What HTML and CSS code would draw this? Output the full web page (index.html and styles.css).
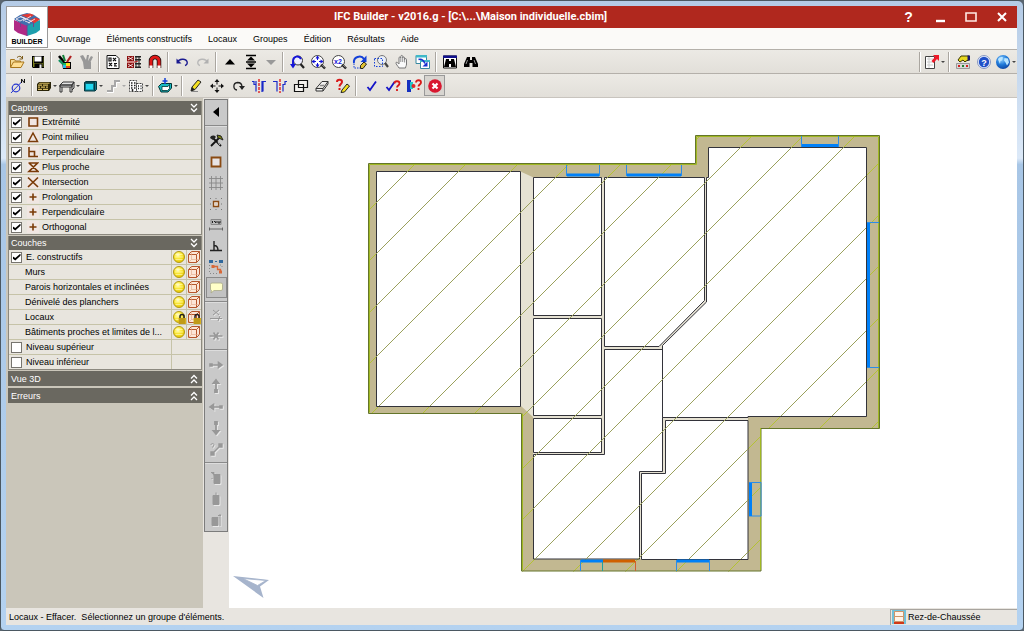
FILE: index.html
```html
<!DOCTYPE html>
<html lang="fr">
<head>
<meta charset="utf-8">
<title>IFC Builder</title>
<link rel="stylesheet" href="styles.css">
</head>
<body>
<svg class="defs" aria-hidden="true">
  <defs>
    <radialGradient id="gBulb" cx=".4" cy=".3" r=".7"><stop offset="0" stop-color="#fffde0"/><stop offset=".35" stop-color="#fff04a"/><stop offset="1" stop-color="#e8c800"/></radialGradient>
    <radialGradient id="gBlue" cx=".4" cy=".3" r=".8"><stop offset="0" stop-color="#8fd0ff"/><stop offset=".5" stop-color="#1e78d8"/><stop offset="1" stop-color="#0a3a98"/></radialGradient>
  </defs>
  <symbol id="bulb" viewBox="0 0 14 14"><circle cx="7" cy="7" r="5.500" fill="url(#gBulb)" stroke="#b09818"/><path d="M3.500 4.500h7M3 7h8M3.500 9.500h7" stroke="#fffbc0" stroke-width=".6"/></symbol>
  <symbol id="cube" viewBox="0 0 14 14"><path d="M1.500 4.500l3-3h8v8l-3 3h-8zM1.500 4.500h8v8M9.500 4.500l3-3" fill="#fce6d6" stroke="#b5562c"/><path d="M4.500 2v7.500l-3 3M4.500 9.500h8" fill="none" stroke="#e2a888" stroke-width=".6"/></symbol>
  <symbol id="lock" viewBox="0 0 14 14"><path d="M8 8V6.500a2 2 0 0 1 4 0V8" fill="none" stroke="#222" stroke-width="1.500"/><path d="M6.500 8h7.500v6H6.500z" fill="#d8b020"/><path d="M8 8v6M10 8v6M12 8v6" stroke="#8a6c08" stroke-width=".6"/></symbol>
  <symbol id="chev" viewBox="0 0 10 10"><path d="M2 1l3 3 3-3M2 5.500l3 3 3-3" fill="none" stroke="#fff" stroke-width="1.300"/></symbol>
  <symbol id="plus" viewBox="0 0 12 12"><path d="M6 2.500v7M2.500 6h7" stroke="#7a3b08" stroke-width="1.600"/></symbol>
  <symbol id="lens" viewBox="0 0 16 16"><path d="M11 10.500l4 4" stroke="#222" stroke-width="2.400"/><path d="M11.500 10.500l3 3" stroke="#aaa" stroke-width=".7"/></symbol>
</svg>

<div class="window">
  <header class="header">
    <div class="logo">
      <svg viewBox="0 0 28 23" width="28" height="23" aria-hidden="true">
        <path d="M1 7l13 5v11l-9-3-4-3z" fill="#b02a86"/><path d="M27 7l-13 5v11l9-3 4-3z" fill="#1d9fae"/>
        <path d="M1 6l6-4 7-2 7 2 6 4-6 4-7 3-7-3z" fill="#3f6fae"/>
        <path d="M8 2l8 3.500 5-3.500-4-1.500zM17 7l6-2.500 4 2-6 4z" fill="#e23a34"/>
        <path d="M3 6l5-2.500 4 2-5 2.500zM12 8l5 2M10 4.500l9 4M18 3l-8 5M22 6l-7 4M7 3.500l6 2.500" fill="none" stroke="#f5e6ee" stroke-width=".9"/>
        <path d="M14 12v11M7.500 9.500V14M20.500 9.500V14" stroke="#74408e"/>
      </svg>
      <span>BUILDER</span>
    </div>
    <div class="titlebar">
      <h1 class="title">IFC Builder - v2016.g - [C:\...\Maison individuelle.cbim]</h1>
      <button class="wbtn" aria-label="Aide"><span class="qmark">?</span></button>
      <button class="wbtn" aria-label="Réduire"><svg viewBox="0 0 14 14"><path d="M3 11h9" stroke="#fff" stroke-width="2.400"/></svg></button>
      <button class="wbtn" aria-label="Agrandir"><svg viewBox="0 0 14 14"><path d="M2 3h10v8H2z" fill="none" stroke="#ffe9e4" stroke-width="1.600"/></svg></button>
      <button class="wbtn" aria-label="Fermer"><svg viewBox="0 0 14 14"><path d="M3 3l8 8M11 3l-8 8" stroke="#fff" stroke-width="2"/></svg></button>
    </div>
    <nav class="menubar">
      <button>Ouvrage</button><button>Éléments constructifs</button><button>Locaux</button><button>Groupes</button><button>Édition</button><button>Résultats</button><button>Aide</button>
    </nav>
  </header>

  <div class="toolbar">
    <button class="tb" aria-label="Ouvrir"><svg viewBox="0 0 16 16"><path d="M1.500 13V5.500h4l1 1.500h5v2" fill="#f5dc98" stroke="#a8761c"/><path d="M1.500 13.500l3-5.500h10.500l-3 5.500z" fill="#ffdf94" stroke="#a8761c"/><path d="M8 3.500c2-1.800 4-1.500 5 .5M13.500 2v3h-3" fill="none" stroke="#7a5a18"/></svg></button>
    <button class="tb" aria-label="Enregistrer"><svg viewBox="0 0 16 16"><path d="M2 2h12v12H3l-1-1z" fill="#000"/><path d="M3 3h1v6h9V3h.500v10H3z" fill="#7f8420"/><path d="M4.500 2.500h7v5h-7z" fill="#fff"/><path d="M4.500 9.500h8V14h-8z" fill="#000"/><path d="M9.500 10.500h2V14h-2z" fill="#e8e8e8"/></svg></button>
    <i class="sep"></i>
    <button class="tb" aria-label="Attributs"><svg viewBox="0 0 16 16"><path d="M5 8h9v7H6z" fill="#000"/><path d="M6 9h3v2H6z" fill="#18c060"/><path d="M9 9h4v3H9z" fill="#f8e020"/><path d="M6 11h3v3H6z" fill="#28b8e8"/><path d="M9 12h4v2H9z" fill="#e04020"/><path d="M2 2l5 6" stroke="#000" stroke-width="2.600"/><path d="M6 1l2 6" stroke="#108038" stroke-width="2"/><path d="M14 2l-4 6" stroke="#b02020" stroke-width="2.200"/><path d="M2 6l4 4" stroke="#109060" stroke-width="2.400"/></svg></button>
    <button class="tb" aria-label="Attributs inactifs"><svg viewBox="0 0 16 16"><path d="M5 8h8v7H6zM2 2l3-1 3 5 1-5h2l-1 6 3-5 2 1-3 6-6 1z" fill="#989898"/></svg></button>
    <i class="sep"></i>
    <button class="tb" aria-label="Calque DXF"><svg viewBox="0 0 16 16"><path d="M2 1.500h9l3 3v10H2z" fill="#fff" stroke="#111"/><path d="M4 4h2v3H4zM8 4l3 3M11 4L8 7M4 9l3 3M7 9l-3 3M9 9.500h3M10 9v3.500M9 12h3" fill="none" stroke="#111" stroke-width="1.200"/></svg></button>
    <button class="tb" aria-label="Calques"><svg viewBox="0 0 16 16"><path d="M1 2h7v5H1zM1 9h7v5H1z" fill="#8c1010"/><path d="M2 3l5 3M7 3L2 6M2 10l5 3M7 10l-5 3" stroke="#fff" stroke-width=".8"/><path d="M9 2h6v1.500H9zM9 5h6v1.500H9zM9 9h6v1.500H9zM9 12.500h6V14H9z" fill="#222"/><path d="M10 2v12M13 2v12" stroke="#222"/><path d="M1 8h8l3-1" fill="none" stroke="#c02020"/></svg></button>
    <button class="tb" aria-label="Accrochage"><svg viewBox="0 0 16 16"><path d="M4 14V7a4 4 0 0 1 8 0v7" fill="none" stroke="#111" stroke-width="4.500"/><path d="M4 13.500V7a4 4 0 0 1 8 0v6.500" fill="none" stroke="#e01818" stroke-width="3"/><path d="M2.500 11.500h3V14h-3zM10.500 11.500h3V14h-3z" fill="#fff"/></svg></button>
    <i class="sep"></i>
    <button class="tb" aria-label="Annuler"><svg viewBox="0 0 16 16"><path d="M3.500 8c1.500-3 8-4 9.500-.5.800 2-.5 3.500-2 4" fill="none" stroke="#1a1a90" stroke-width="1.400"/><path d="M2.500 4.500v5h5z" fill="#1a1a90"/></svg></button>
    <button class="tb" aria-label="Rétablir"><svg viewBox="0 0 16 16"><path d="M12.500 8C11 5 4.500 4 3 7.500c-.8 2 .5 3.500 2 4" fill="none" stroke="#b8b8b8" stroke-width="1.400"/><path d="M13.500 4.500v5h-5z" fill="#b0b0b0"/></svg></button>
    <i class="sep"></i>
    <button class="tb" aria-label="Monter"><svg viewBox="0 0 16 16"><path d="M3 10.500L8 5l5 5.500z"/></svg></button>
    <button class="tb" aria-label="Aller à l'étage"><svg viewBox="0 0 16 16"><path d="M3 1.500h10M3 14.500h10M3 8h10" stroke="#000" stroke-width="1.300"/><path d="M4 6.500l4-4 4 4zM4 9.500l4 4 4-4z"/></svg></button>
    <button class="tb slim" aria-label="Descendre"><svg viewBox="0 0 16 16"><path d="M3 6l5 5 5-5z" fill="#999"/></svg></button>
    <i class="sep"></i>
    <button class="tb" aria-label="Zoom précédent"><svg viewBox="0 0 16 16"><circle cx="9" cy="6.500" r="4.500" fill="#eef" stroke="#333"/><path d="M11.500 10l3.500 4" stroke="#222" stroke-width="2.200"/><path d="M4 12V7c0-5 6-6 8-2" fill="none" stroke="#1414d8" stroke-width="1.900"/><path d="M1 10h6l-3 4.500z" fill="#1414d8"/></svg></button>
    <button class="tb" aria-label="Zoom étendu"><svg viewBox="0 0 16 16"><circle cx="7.500" cy="7.500" r="6" fill="#fff" stroke="#444"/><use href="#lens"/><path d="M7.500 2v11M2 7.500h11" stroke="#1414d8" stroke-dasharray="4 3"/><path d="M5.500 4.500l2-3 2 3zM5.500 10.500l2 3 2-3zM4.500 5.500l-3 2 3 2zM10.500 5.500l3 2-3 2z" fill="#1414d8"/></svg></button>
    <button class="tb" aria-label="Zoom x2"><svg viewBox="0 0 16 16"><circle cx="7.500" cy="7.500" r="6" fill="#fff" stroke="#444"/><use href="#lens"/><text x="3" y="10" class="x2">x2</text></svg></button>
    <button class="tb" aria-label="Redessiner"><svg viewBox="0 0 16 16"><path d="M2 9c-1-6 7-8.500 10-4" fill="none" stroke="#1440d8" stroke-width="2"/><path d="M14.500 1.500V8H8.500z" fill="#1440d8"/><path d="M2 9.500v4.500h6" fill="none" stroke="#1440d8" stroke-dasharray="1.500 1"/><path d="M8.500 11.500l3.500-3.500 2.500 2-3.500 4.500H8.500z" fill="#e0c030" stroke="#222"/></svg></button>
    <button class="tb" aria-label="Zoom fenêtre"><svg viewBox="0 0 16 16"><circle cx="9" cy="6" r="4.500" fill="#e8eef8" stroke="#777"/><path d="M12 9l3 4" stroke="#444" stroke-width="2.200"/><path d="M1.500 4.500h8v8h-8z" fill="none" stroke="#1440d8" stroke-dasharray="1.500 1.500"/></svg></button>
    <button class="tb" aria-label="Déplacer la vue"><svg viewBox="0 0 16 16"><path d="M5 14c-1-2-3.500-4-3-5.500 1-.8 2 .8 3 1.500V4c0-1.500 1.800-1.500 1.800 0V2.500c0-1.500 1.900-1.500 1.900 0V4c0-1.500 1.900-1.300 1.900 0v1.500c0-1.200 1.900-1.200 1.900 0V10c0 2-1 2.500-1 4z" fill="#fafafa" stroke="#777"/><path d="M6.800 4v4M8.700 4v4M10.600 5v3.500" stroke="#777" stroke-width=".8"/></svg></button>
    <button class="tb" aria-label="Vue suivante"><svg viewBox="0 0 16 16"><path d="M1 1.500h10.500v8H1z" fill="#fff" stroke="#3888a0"/><path d="M1 1h11v2.500H1z" fill="#40b8c8"/><path d="M5.500 6.500h9v8h-9z" fill="#fff" stroke="#3888a0"/><path d="M5 6h10v2H5z" fill="#40b8c8"/><path d="M3.500 5.500c3-1 5 .5 6.500 4" fill="none" stroke="#1830d0" stroke-width="1.600"/><path d="M12.500 7.500v5h-5z" fill="#1830d0"/></svg></button>
    <i class="sep"></i>
    <button class="tb" aria-label="Rechercher dans la vue"><svg viewBox="0 0 16 16"><path d="M1.500 2h13v12h-13z" fill="#fff" stroke="#111"/><path d="M1 1.500h14V4H1z" fill="#10108c"/><path d="M4 5h3v2h2V5h3l2 8H9v-3H7v3H2z"/></svg></button>
    <button class="tb" aria-label="Rechercher"><svg viewBox="0 0 16 16"><path d="M4 3h3v3h2V3h3l3 7v3H9.500V9h-3v4H1v-3z"/><path d="M4.500 6L3 10M11 6l1.500 4" stroke="#bbb" stroke-width=".8"/></svg></button>
    <span class="spring"></span>
    <i class="sep"></i>
    <button class="tb wide" aria-label="Exporter"><svg viewBox="0 0 16 16"><path d="M1.500 2.500h9v12h-9z" fill="#fff" stroke="#444"/><path d="M3 5h6M3 8h6M3 11h6M5 3v11" stroke="#ccc"/><path d="M9 1h6v6l-2-2-3.500 4-2-2L11 3z" fill="#f01828"/></svg><b class="dd"></b></button>
    <i class="sep"></i>
    <button class="tb" aria-label="Options"><svg viewBox="0 0 16 16"><path d="M1.500 9.500h13v5h-13z" fill="#d8d8d8" stroke="#999"/><path d="M3 11h2v2H3zM11 11h2v2h-2z" fill="#d02020"/><path d="M7 11h2v2H7z" fill="#208030"/><path d="M3 6l3-4h8v4l-3 1-1 1-2-2-3 2z" fill="#e8d820" stroke="#3c3800"/><path d="M12.500 1.500H15v5h-2.500z" fill="#181870"/></svg></button>
    <button class="tb" aria-label="Aide en ligne"><svg viewBox="0 0 16 16"><circle cx="8" cy="8" r="6.500" fill="#e8f0ff" stroke="#8898c0"/><circle cx="8" cy="8" r="5.200" fill="#2050c8"/><text x="8" y="11.500" class="help">?</text></svg></button>
    <button class="tb wide" aria-label="Internet"><svg viewBox="0 0 16 16"><circle cx="8" cy="8" r="7" fill="url(#gBlue)"/><path d="M3 5.500c1-2.500 3.500-3 5-2l-1 3-1.500.5L5 10zM9.500 4l3.500.500 1 4-2 3-1.500-3-1.500-2z" fill="#b8e4ff"/></svg><b class="dd"></b></button>
  </div>

  <div class="toolbar second">
    <button class="tb wide" aria-label="Référence"><svg viewBox="0 0 16 16"><circle cx="6" cy="10" r="3.800" fill="none" stroke="#2838d0" stroke-width="1.200"/><path d="M1 15L12 3.500" stroke="#2838d0"/><path d="M11.500 5V1l3 4V1" fill="none" stroke="#111"/></svg></button>
    <i class="sep"></i>
    <button class="tb wide" aria-label="Murs"><svg viewBox="0 0 16 16"><path d="M1 6l2-2h12v6l-2 3H1z" fill="#2a2408"/><path d="M2 6.500h4v1.300H2zM7 6.500h5v1.300H7zM2 8.500h2v1.300H2zM5 8.500h4v1.300H5zM10 8.500h2v1.300h-2zM2 10.700h4V12H2zM7 10.700h5V12H7zM3.500 4.800h10v.9H3z" fill="#d8bc60"/></svg><b class="dd"></b></button>
    <button class="tb wide" aria-label="Planchers"><svg viewBox="0 0 16 16"><path d="M1 7l3-3h11l-2 3zM1 7h12v2H1zM1 7v7h2V9M11 9v5h2V7l2-3v6l-2 2" fill="#e4e4e4" stroke="#333"/></svg><b class="dd"></b></button>
    <button class="tb wide" aria-label="Ouvertures"><svg viewBox="0 0 16 16"><path d="M2.500 4.500l1.500-1h10.500v8l-1.500 1.500H2.500z" fill="#107888" stroke="#043840"/><path d="M4 6h7v5.500H4z" fill="#20d8f0"/><path d="M12.500 4.500v8M2.500 4.800h10" stroke="#043840"/></svg><b class="dd"></b></button>
    <button class="tb wide" aria-label="Escaliers" disabled><svg viewBox="0 0 16 16"><path d="M2 13h5V8h3V3h5" fill="none" stroke="#a8a8a8" stroke-width="2"/><path d="M2 14.500h6.500v-5h3v-5H15" fill="none" stroke="#fff"/></svg><b class="dd pale"></b></button>
    <button class="tb wide" aria-label="Bâtiments"><svg viewBox="0 0 16 16"><path d="M1.500 2.500h7v11h-7zM8.500 5.500h6v8h-6z" fill="#fff" stroke="#444" stroke-dasharray="2 1"/><path d="M3 5h1.500M6 5h1.500M3 7.500h1.500M6 7.500h1.500M3 10h1.500M6 10h1.500M10 8h1M12.500 8h1M10 10.500h1M12.500 10.500h1M4.500 13v-2" stroke="#222" stroke-width="1.500"/></svg><b class="dd"></b></button>
    <i class="sep"></i>
    <button class="tb wide" aria-label="Locaux"><svg viewBox="0 0 16 16"><path d="M1.500 8.500l3-3h10v4.500l-3.500 4h-7z" fill="#18b8c0" stroke="#033"/><path d="M5 8.500h6l1.500-2v4l-2 2H5z" fill="#fff" stroke="#033" stroke-width=".8"/><path d="M8 0v6M5.500 3h5" stroke="#1440d8" stroke-width="1.500"/></svg><b class="dd"></b></button>
    <i class="sep"></i>
    <button class="tb" aria-label="Modifier"><svg viewBox="0 0 16 16"><path d="M4 9l6-7 3 2-6 7.500-4 1.500z" fill="#f4e020" stroke="#222"/><path d="M4 9l3 2.500-4 1.500z" fill="#222"/><path d="M3 13.500h7" stroke="#888"/></svg></button>
    <button class="tb" aria-label="Déplacer"><svg viewBox="0 0 16 16"><path d="M8 3v10M3 8h10" stroke="#111" stroke-dasharray="3.500 3"/><path d="M5.500 4L8 1l2.500 3zM5.500 12L8 15l2.500-3zM4 5.500L1 8l3 2.500zM12 5.500L15 8l-3 2.500z" fill="#111"/></svg></button>
    <button class="tb" aria-label="Rotation"><svg viewBox="0 0 16 16"><path d="M7 12c-4-.5-4.500-7 .5-7.500 3 0 4.500 2 4.500 4.500" fill="none" stroke="#222" stroke-width="1.300"/><path d="M9 8h6l-3 4z" fill="#222"/></svg></button>
    <button class="tb" aria-label="Symétrie copie"><svg viewBox="0 0 16 16"><path d="M8 1v14" stroke="#e02020" stroke-width="1.400" stroke-dasharray="3 1"/><path d="M1 3.500h2v3h2v7M5 3v4M15 3.500h-3v10M11 3v11" fill="none" stroke="#1a2ac8" stroke-width="1.200"/></svg></button>
    <button class="tb" aria-label="Symétrie déplacement"><svg viewBox="0 0 16 16"><path d="M8 1v14" stroke="#e02020" stroke-width="1.400" stroke-dasharray="3 1"/><path d="M1 3.500h4v10M15 3.500h-2v3h-2v7" fill="none" stroke="#1a2ac8" stroke-width="1.200"/></svg></button>
    <button class="tb" aria-label="Copier"><svg viewBox="0 0 16 16"><path d="M5.500 2.500h9v7h-9zM1.500 6.500h9v7h-9z" fill="#f4f2ee" stroke="#111" stroke-width="1.200"/></svg></button>
    <button class="tb" aria-label="Effacer"><svg viewBox="0 0 16 16"><path d="M2 10.500l6-7h6l-5 7zM2 10.500v2.500h7l5-7V3.500M9 10.500V13" fill="#f0f0f0" stroke="#333"/><path d="M6 7.500h4" stroke="#888" stroke-width="1.500"/></svg></button>
    <button class="tb" aria-label="Interroger et modifier"><svg viewBox="0 0 16 16"><path d="M2 4c0-3 5-3 5 0 0 2-2.500 2-2.500 4.500M4.500 10v2" fill="none" stroke="#d81818" stroke-width="2"/><path d="M7 12l5-6 2.500 2-5 6-3.500.500z" fill="#f4e020" stroke="#222"/></svg></button>
    <i class="sep broad"></i>
    <button class="tb" aria-label="Valider"><svg viewBox="0 0 16 16"><path d="M3.500 9l2.500 3 6-8.500" fill="none" stroke="#1414c8" stroke-width="1.800"/></svg></button>
    <button class="tb" aria-label="Vérifier"><svg viewBox="0 0 16 16"><path d="M1.500 9l2.500 3 5.500-8" fill="none" stroke="#1414c8" stroke-width="1.800"/><path d="M9.500 5.500c0-3 5-3 5 0 0 2-2.500 2-2.500 4M12 11v2" fill="none" stroke="#d81818" stroke-width="1.800"/></svg></button>
    <button class="tb" aria-label="Vérifier les liaisons"><svg viewBox="0 0 16 16"><path d="M1 2h4v12H1z" fill="#1430c0"/><path d="M4 4h3v7H4z" fill="#20c8c8"/><circle cx="7.500" cy="8" r="2" fill="#e02828"/><path d="M10 4.500c0-3 5-3 5 0 0 2-2.500 2-2.500 4M12.500 10v2" fill="none" stroke="#d81818" stroke-width="1.800"/></svg></button>
    <button class="tb pressed" aria-label="Annuler la sélection"><svg viewBox="0 0 16 16"><circle cx="8" cy="8" r="6.800" fill="#d81830"/><path d="M5.500 5.500l5 5M10.500 5.500l-5 5" stroke="#fff" stroke-width="2.200"/></svg></button>
  </div>

  <main class="main">
    <aside class="sidebar">
      <section class="panel">
        <h2 class="phead">Captures<svg viewBox="0 0 10 10"><use href="#chev"/></svg></h2>
        <label class="row"><input type="checkbox" checked><svg class="cap" viewBox="0 0 12 12"><path d="M2 2h8.500v8H2z" fill="none" stroke="#7a3b08" stroke-width="1.600"/></svg>Extrémité</label>
        <label class="row"><input type="checkbox" checked><svg class="cap" viewBox="0 0 12 12"><path d="M6 2L1.500 10.500h9z" fill="none" stroke="#7a3b08" stroke-width="1.500"/></svg>Point milieu</label>
        <label class="row"><input type="checkbox" checked><svg class="cap" viewBox="0 0 12 12"><path d="M2 1v9.500h9M2 5.500h5.500v5" fill="none" stroke="#7a3b08" stroke-width="1.600"/></svg>Perpendiculaire</label>
        <label class="row"><input type="checkbox" checked><svg class="cap" viewBox="0 0 12 12"><path d="M1.500 2h9L2 10.500h9L2 2z" fill="none" stroke="#7a3b08" stroke-width="1.700"/></svg>Plus proche</label>
        <label class="row"><input type="checkbox" checked><svg class="cap" viewBox="0 0 12 12"><path d="M1 1.500l10 9.500M11 1.500L1 11" stroke="#7a3b08" stroke-width="1.700"/></svg>Intersection</label>
        <label class="row"><input type="checkbox" checked><svg class="cap" viewBox="0 0 12 12"><use href="#plus"/></svg>Prolongation</label>
        <label class="row"><input type="checkbox" checked><svg class="cap" viewBox="0 0 12 12"><use href="#plus"/></svg>Perpendiculaire</label>
        <label class="row"><input type="checkbox" checked><svg class="cap" viewBox="0 0 12 12"><use href="#plus"/></svg>Orthogonal</label>
      </section>
      <section class="panel">
        <h2 class="phead">Couches<svg viewBox="0 0 10 10"><use href="#chev"/></svg></h2>
        <div class="row layer"><label class="name"><input type="checkbox" checked>E. constructifs</label><span class="cell"><svg viewBox="0 0 14 14"><use href="#bulb"/></svg></span><span class="cell"><svg viewBox="0 0 14 14"><use href="#cube"/></svg></span></div>
        <div class="row layer"><span class="name sub">Murs</span><span class="cell"><svg viewBox="0 0 14 14"><use href="#bulb"/></svg></span><span class="cell"><svg viewBox="0 0 14 14"><use href="#cube"/></svg></span></div>
        <div class="row layer"><span class="name sub">Parois horizontales et inclinées</span><span class="cell"><svg viewBox="0 0 14 14"><use href="#bulb"/></svg></span><span class="cell"><svg viewBox="0 0 14 14"><use href="#cube"/></svg></span></div>
        <div class="row layer"><span class="name sub">Dénivelé des planchers</span><span class="cell"><svg viewBox="0 0 14 14"><use href="#bulb"/></svg></span><span class="cell"><svg viewBox="0 0 14 14"><use href="#cube"/></svg></span></div>
        <div class="row layer"><span class="name sub">Locaux</span><span class="cell"><svg viewBox="0 0 14 14"><use href="#bulb"/><use href="#lock"/></svg></span><span class="cell"><svg viewBox="0 0 14 14"><use href="#cube"/><use href="#lock"/></svg></span></div>
        <div class="row layer"><span class="name sub">Bâtiments proches et limites de l...</span><span class="cell"><svg viewBox="0 0 14 14"><use href="#bulb"/></svg></span><span class="cell"><svg viewBox="0 0 14 14"><use href="#cube"/></svg></span></div>
        <div class="row layer"><label class="name"><input type="checkbox">Niveau supérieur</label><span class="cell span2"></span></div>
        <div class="row layer"><label class="name"><input type="checkbox">Niveau inférieur</label><span class="cell span2"></span></div>
      </section>
      <section class="panel closed"><h2 class="phead">Vue 3D<svg class="up" viewBox="0 0 10 10"><use href="#chev"/></svg></h2></section>
      <section class="panel closed"><h2 class="phead">Erreurs<svg class="up" viewBox="0 0 10 10"><use href="#chev"/></svg></h2></section>
    </aside>

    <div class="vwrap">
      <div class="vbar">
        <button class="tb" aria-label="Replier"><svg viewBox="0 0 16 16"><path d="M11 3v10L5 8z"/></svg></button>
        <i class="hsep"></i>
        <button class="tb" aria-label="Configuration"><svg viewBox="0 0 16 16"><path d="M4 4l9 9M11 5l-8 8" stroke="#111" stroke-width="1.800"/><path d="M2 5c1-3 4-3 6-1L5 7z" fill="#222"/><path d="M9 2l4 1 2 4-2-1-3-1z" fill="#7c8410" stroke="#222"/><path d="M10 9l2 3" stroke="#fff" stroke-width=".8"/></svg></button>
        <button class="tb" aria-label="Captures"><svg viewBox="0 0 16 16"><path d="M3.500 3.500h9v9h-9z" fill="#e8e4e4" stroke="#8a4a12" stroke-width="1.800"/></svg></button>
        <button class="tb" aria-label="Grille"><svg viewBox="0 0 16 16"><path d="M3.500 1v14M8 1v14M12.500 1v14M1 3.500h14M1 8h14M1 12.500h14" stroke="#888" stroke-width=".9"/></svg></button>
        <button class="tb" aria-label="Capture grille"><svg viewBox="0 0 16 16"><path d="M5.500 5.500h5v5h-5z" fill="#f8eee4" stroke="#8a4a12" stroke-width="1.400"/><path d="M2 2.500h12M2 8h12M2 13.500h12" stroke="#777" stroke-dasharray="1 4.500"/></svg></button>
        <button class="tb" aria-label="Cotes"><svg viewBox="0 0 16 16"><path d="M3 2.500h10v5H3z" fill="#bbb" stroke="#888"/><path d="M4.500 4v2M6 4l2 2M8 4v2M10 4v2h2V4" fill="none" stroke="#222"/><path d="M1.500 12h13M1.500 10.500v3M14.500 10.500v3" stroke="#666"/></svg></button>
        <button class="tb" aria-label="Ortho"><svg viewBox="0 0 16 16"><path d="M2 12.500h12M6 3v9M6 7.500c3 0 4 2 4 5" fill="none" stroke="#222" stroke-width="1.400"/></svg></button>
        <button class="tb" aria-label="Repérage"><svg viewBox="0 0 16 16"><path d="M1 1h4v3H1zM7 2h2v1H7zM11 1h4v3h-4z" fill="#30689c"/><path d="M5 7.500h4.500v3h3v2" fill="none" stroke="#d86838" stroke-width="1.300"/><path d="M3.500 6h3v3h-3zM11 11.500h3v3h-3z" fill="#d86838"/><path d="M1.500 6v8.500h8M12 6h2v3" fill="none" stroke="#888" stroke-dasharray="1 2"/></svg></button>
        <button class="tb pressed" aria-label="Infobulles"><svg viewBox="0 0 16 16"><path d="M4 3h9a1.500 1.500 0 0 1 1.500 1.500V9A1.500 1.500 0 0 1 13 10.500H6L3 13l.5-2.500A1.500 1.500 0 0 1 2.500 9V4.500A1.500 1.500 0 0 1 4 3z" fill="#ffffc8" stroke="#a8a888" stroke-width=".8"/></svg></button>
        <i class="hsep short"></i>
        <button class="tb dim" aria-label="Point sur ligne" disabled><svg viewBox="0 0 16 16"><path d="M5 3l6 5M11 3L5 8M2 11.500h12M10 14l2-5"/></svg></button>
        <button class="tb dim" aria-label="Couper" disabled><svg viewBox="0 0 16 16"><path d="M1.500 8h13M5.500 4.500l5 7M10.500 4.500l-5 7" stroke-width="1.600"/></svg></button>
        <i class="hsep"></i>
        <button class="tb dim" aria-label="Droite" disabled><svg viewBox="0 0 16 16"><path d="M2 8h11M10.500 5.500L14 8l-3.500 2.500zM2 7h2v2H2z" stroke-width="1.600"/></svg></button>
        <button class="tb dim" aria-label="Haut" disabled><svg viewBox="0 0 16 16"><path d="M8 3v11M5.500 5L8 2l2.500 3zM7 12h2v2H7z" stroke-width="1.800"/></svg></button>
        <button class="tb dim" aria-label="Gauche" disabled><svg viewBox="0 0 16 16"><path d="M3 8h11M5.500 5.500L2 8l3.500 2.500zM12 7h2v2h-2z" stroke-width="1.600"/></svg></button>
        <button class="tb dim" aria-label="Bas" disabled><svg viewBox="0 0 16 16"><path d="M8 2v11M5.500 11L8 14l2.500-3zM7 2h2v2H7z" stroke-width="1.800"/></svg></button>
        <button class="tb dim" aria-label="Diagonale" disabled><svg viewBox="0 0 16 16"><path d="M5 12l7-7M11 3h3v3h-3zM3 11h3v3H3z" stroke-width="1.400"/><path d="M3 4c0-2 3-2 3 0L4.500 6.500" fill="none"/></svg></button>
        <i class="hsep"></i>
        <button class="tb dim" aria-label="Aligner à gauche" disabled><svg viewBox="0 0 16 16"><path d="M6 4.500h6v9H6zM3 2.500h3v3M4 8v1"/></svg></button>
        <button class="tb dim" aria-label="Centrer" disabled><svg viewBox="0 0 16 16"><path d="M5 4.500h6v9H5zM8 1.500v3"/></svg></button>
        <button class="tb dim" aria-label="Aligner à droite" disabled><svg viewBox="0 0 16 16"><path d="M4 5.500h6v8H4zM12 2v12M10 3.500h3"/></svg></button>
      </div>
    </div>

    <div class="canvas">
      <svg class="plan" viewBox="229 98 788 510" preserveAspectRatio="xMidYMid meet" role="img" aria-label="Plan du rez-de-chaussée">
        <defs>
          <path id="hatch" d="M365 214l80-80M365 265l132-132M365 317l184-184M365 368l236-236M365 420l288-288M365 471l340-340M365 523l392-392M365 574l444-444M365 626l496-496M461 581l424-424M513 581l372-372M564 581l321-321M616 581l269-269M667 581l218-218M719 581l166-166"/>
          <clipPath id="outer"><path d="M369 164h326.500v-29H880v294H761v142.500H522V414H369z"/></clipPath>
          <clipPath id="inner"><path d="M376 171h144.500l13 6H706h2.500v-30H866v269H748v143H533V417l-12-11H376z"/></clipPath>
        </defs>
        <path d="M369 164h326.500v-28.500h184v293h-118.500v142.500H522V413.500H369z" fill="#c2b891"/>
        <use href="#hatch" clip-path="url(#outer)" class="hwall"/>
        <path d="M376.500 171.500h144l13 6H708.500v-30h158V416H748v143H533V417l-12-11H376z" fill="#e6e2d3"/>
        <g class="rooms">
          <path d="M376.500 171.500h144V406.500h-144z"/>
          <path d="M533.500 177.500h68V315.500h-68z"/>
          <path d="M533.500 318.500h68V415.500h-68z"/>
          <path d="M533.500 418.500h68V452.500h-68z"/>
          <path d="M604.500 177.500h100V300.500L659 346.500h-54.500z"/>
          <path d="M604.500 349.500h58V471.500H639.500V559H533.500V454.500h71z"/>
          <path d="M665.500 420.500h82.500V559.500H641.500V473.500h24z"/>
          <path d="M708.500 147.500h158V416.500H748v1H662.500V345.500L706.500 302V177.500h2z"/>
        </g>
        <use href="#hatch" clip-path="url(#inner)" class="hroom"/>
        <path d="M368.500 163.500h327v-28h184v293h-118.500v142.500H521.500V413.500H368.500z" fill="none" stroke="#64752a"/>
        <path d="M369.500 412.500V164.500h327v-28h182" fill="none" stroke="#a0b822"/>
        <path d="M522.500 570V413.500M760.500 428v142M878.500 137v291" fill="none" stroke="#a0b822"/>
        <g class="win">
          <path d="M566.500 165v11M599.500 165v11M626.500 165v11M681.500 165v11M801.500 136v11M838.500 136v11M867 222.500h12M867 367.500h12M580.500 560v11M676.500 560v11M709.500 560v11M749 482.500h12v33.500h-12"/>
          <path d="M567 175h32M627 175h54M802 145.500h36M868.500 223v144M581 561h22M677 561h32M750.500 483v33" stroke-width="3" stroke="#0080f8"/>
          <path d="M603 561h32" stroke="#d06000" stroke-width="3"/>
          <path d="M602.500 562v9" stroke="#20a0a0"/><path d="M635.500 561v10" stroke="#d06030"/>
        </g>
        <path d="M233 576l36 4-9 6.500 3.500 11.500z" fill="#a6b4cc"/>
        <path d="M243 578.500l23 2-8.500 5z" fill="#fff" stroke="#a6b4cc" stroke-width=".8"/>
      </svg>
    </div>
  </main>

  <footer class="status">
    <span class="msg">Locaux - Effacer.&nbsp; Sélectionnez un groupe d'éléments.</span>
    <span class="level"><svg viewBox="0 0 14 14"><path d="M0 0h14v14H0z" fill="#70c0d8"/><path d="M2.500 1.500h9v5h-9zM2.500 6.500h9v5h-9z" fill="#fff4e8" stroke="#d09468"/><path d="M2 12h10v2H2z" fill="#d03818"/></svg>Rez-de-Chaussée</span>
  </footer>
</div>
</body>
</html>
```
FILE: styles.css
```css
* { box-sizing: border-box; }

body {
  margin: 0;
  height: 100vh;
  background: #5b6670;
  font: 9px/14px "Liberation Sans", Arial, sans-serif;
  color: #000;
}

button {
  margin: 0;
  padding: 0;
  border: 0;
  background: none;
  font: inherit;
  color: inherit;
}

svg { display: block; }
.defs { position: absolute; width: 0; height: 0; }

.window {
  display: flex;
  flex-direction: column;
  height: 100vh;
  padding: 5px 6px 5px 5px;
  border: 1px solid #4b5862;
  border-radius: 6px 6px 4px 4px;
  background: linear-gradient(#b4cbe6, #dce9f8 25%, #a8c6e6 26%, #b4d2f0);
}

.header {
  display: grid;
  grid-template-columns: 42px 1fr;
  grid-template-rows: 22px 21px;
  background: #fbfaf8;
}

.logo {
  grid-row: 1 / 3;
  display: flex;
  flex-direction: column;
  align-items: center;
  justify-content: space-between;
  height: 42px;
  padding: 6px 0 1px;
  border: 1px solid #9a9a9a;
  background: #fff;
  font: bold 7px/9px "Liberation Sans", sans-serif;
}

.titlebar { display: flex; align-items: center; background: #b0281e; color: #fff; }
.title {
  flex: 1;
  margin: 0;
  text-align: center;
  font: bold 11px/14px Roboto, "Liberation Sans", sans-serif;
}
.wbtn { display: flex; justify-content: center; align-items: center; width: 31px; height: 22px; }
.wbtn svg { width: 14px; height: 14px; }
.qmark { font: bold 14px/20px "Liberation Sans", sans-serif; }

.menubar { display: flex; align-items: center; }
.menubar button { padding: 0 8px; }

.toolbar {
  display: flex;
  align-items: center;
  height: 24px;
  flex: none;
  border-top: 1px solid #b4b0aa;
  background: linear-gradient(#eceae5, #e2dfd9);
}
.toolbar.second { border-bottom: 1px solid #c8c4be; height: 25px; }

.tb {
  display: flex;
  flex: none;
  align-items: center;
  justify-content: center;
  width: 21px;
  height: 21px;
}
.tb svg { width: 16px; height: 16px; flex: none; }
.tb.slim { width: 19px; }
.tb.wide { width: 23px; }
.tb.pressed { border: 1px solid #999; background: #d8d5d0; }

.dd {
  border: 2px solid transparent;
  border-top: 2px solid #444;
  border-bottom: 0;
  margin-left: 1px;
}
.dd.pale { border-top-color: #aaa; }

.sep { flex: none; width: 6px; height: 20px; background: linear-gradient(90deg, transparent 2px, #aaa6a0 2px, #aaa6a0 3px, #fff 3px, #fff 4px, transparent 4px); }
.sep.broad { width: 8px; }
.spring { flex: 1; }

.x2 { font: bold 7px "Liberation Sans", sans-serif; fill: #1414d8; }
.help { font: bold 9px "Liberation Sans", sans-serif; fill: #fff; text-anchor: middle; }

.main { display: flex; flex: 1; min-height: 0; background: #e8e5e0; }

.sidebar {
  display: flex;
  flex-direction: column;
  gap: 1px;
  width: 197px;
  flex: none;
  padding: 3px 1px 0 2px;
  background: #cac6ba;
}

.panel { border: 1px solid #8c897f; border-top: 0; background: #e8e5de; }
.panel.closed { border: 0; margin-bottom: 1px; }

.phead {
  display: flex;
  align-items: center;
  justify-content: space-between;
  height: 14px;
  margin: 0;
  padding: 0 2px;
  background: #6a6860;
  color: #fff;
  font-size: 9px;
  font-weight: normal;
}
.closed .phead { height: 15px; padding: 0 3px; }
.phead svg { width: 10px; height: 10px; }
.phead .up { transform: scaleY(-1); }

.row {
  display: flex;
  align-items: center;
  height: 15px;
  padding-left: 2px;
  border-bottom: 1px solid #c6c3a8;
}
.row:last-child { height: 14px; border-bottom: 0; }

input[type="checkbox"] {
  appearance: none;
  display: grid;
  place-items: center;
  flex: none;
  width: 11px;
  height: 11px;
  margin: 0;
  border: 1px solid #77756f;
  background: #fff;
}
input[type="checkbox"]:checked::after {
  content: "";
  width: 8px;
  height: 7px;
  background: #000;
  clip-path: polygon(0 40%, 35% 66%, 100% 0, 100% 32%, 35% 100%, 0 72%);
}

.cap { width: 12px; height: 12px; margin: 0 3px 0 5px; background: #f0e6e2; }

.layer .name { display: flex; align-items: center; flex: 1; gap: 4px; min-width: 0; white-space: nowrap; }
.layer .sub { padding-left: 14px; }
.cell { flex: none; width: 15px; height: 14px; border-left: 1px solid #c6c3a8; }
.cell svg { width: 14px; height: 14px; }
.cell.span2 { width: 30px; }

.vwrap { flex: none; width: 26px; padding: 1px 1px 0; }
.vbar {
  display: flex;
  flex-direction: column;
  align-items: center;
  padding: 1px 0;
  border: 1px solid #7c7c7c;
  background: #c9c9c9;
}
.vbar .tb.pressed { background: #c2c2c2; border-color: #8a8a8a; }
.hsep { width: 22px; height: 8px; background: linear-gradient(transparent 3px, #8a8a8a 3px, #8a8a8a 4px, #ddd 4px, #ddd 5px, transparent 5px); }
.hsep.short { height: 6px; }
.dim svg { fill: #989898; stroke: #989898; filter: drop-shadow(1px 1px 0 #e8e8e8); }

.canvas { flex: 1; min-width: 0; background: #fff; }
.plan { width: 100%; height: 100%; }
.rooms { fill: #fff; stroke: #33333a; stroke-width: 1; }
.hwall { stroke: #b4c234; stroke-width: 1; }
.hroom { stroke: #9aa05c; stroke-width: 1; }
.win { fill: none; stroke: #2a8ce8; }

.status {
  display: flex;
  align-items: center;
  flex: none;
  height: 17px;
  background: #e8e5e0;
}
.msg { flex: 1; padding-left: 3px; }
.level {
  display: flex;
  align-items: center;
  gap: 2px;
  width: 127px;
  height: 16px;
  padding-left: 1px;
  border: 1px solid #a8a49e;
  border-width: 1px 0 0 1px;
}
.level svg { width: 14px; height: 14px; }
```
